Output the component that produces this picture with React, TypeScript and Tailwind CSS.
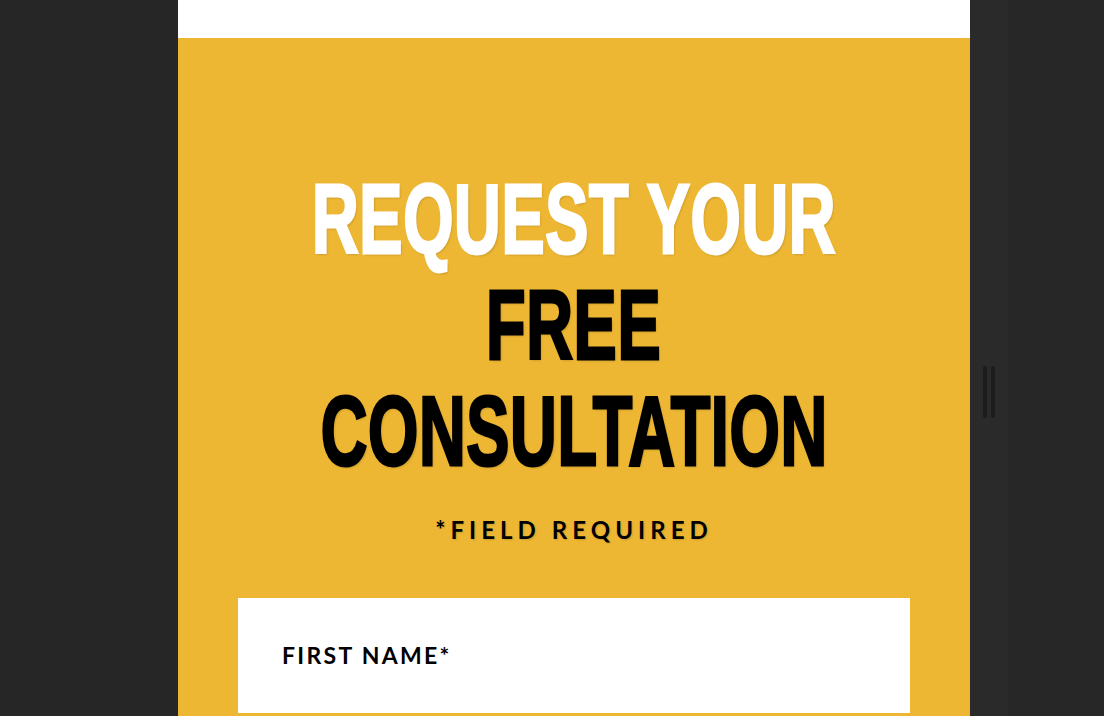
export default function App() {
  const heading =
    "inline-block whitespace-nowrap scale-x-[0.66] font-['Liberation_Sans_Narrow','Liberation_Sans',sans-serif] font-bold text-[98px] leading-[106px] tracking-[0.01em] [-webkit-text-stroke:3px_currentColor] [text-shadow:2px_2px_3px_rgba(0,0,0,0.18)]";

  return (
    <div className="flex h-[716px] w-[1104px] overflow-hidden bg-[#262626]">
      <div className="w-[178px] shrink-0" />

      {/* Main column */}
      <main className="flex w-[792px] shrink-0 flex-col">
        <div className="h-[38px] shrink-0 bg-white" />
        <section className="flex flex-1 flex-col items-center bg-[#eeb733] pt-[128px]">
          <h1 className="flex flex-col items-center text-center">
            <span className={`${heading} text-white`}>REQUEST YOUR</span>
            <span className={`${heading} text-black`}>FREE</span>
            <span className={`${heading} text-black`}>CONSULTATION</span>
          </h1>

          <p className="mt-[30px] whitespace-nowrap font-['Lato',sans-serif] text-[24px] font-bold leading-[32px] tracking-[0.21em] text-black [text-shadow:1px_1px_2px_rgba(0,0,0,0.15)]">
            *FIELD REQUIRED
          </p>

          <div className="mt-[52px] h-[115px] w-[672px] shrink-0 bg-white pl-[44px] pt-[43px]">
            <label className="whitespace-nowrap font-['Lato',sans-serif] text-[23px] font-bold leading-[28px] tracking-[0.1em] text-black">
              FIRST NAME*
            </label>
          </div>
        </section>
      </main>

      {/* Right side with drag handle */}
      <div className="flex w-[38px] shrink-0 justify-center bg-[#2a2a2a] pt-[366px]">
        <div className="flex h-[52px] gap-[4px]">
          <div className="h-[52px] w-[4px] rounded-full bg-[#1c1c1c]" />
          <div className="h-[52px] w-[4px] rounded-full bg-[#1c1c1c]" />
        </div>
      </div>
      <div className="flex-1 bg-[#272727]" />
    </div>
  );
}
